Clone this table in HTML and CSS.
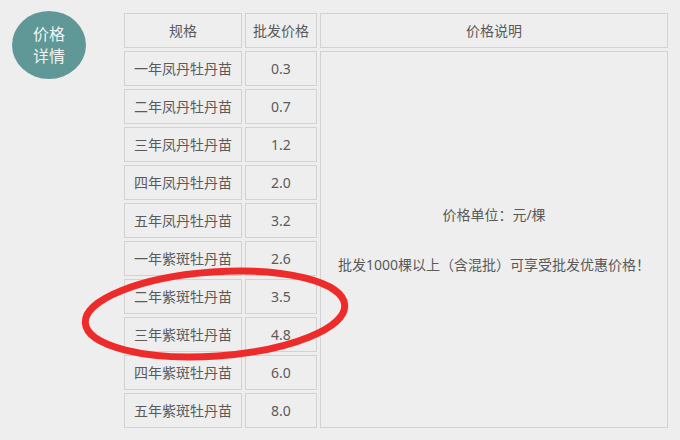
FILE: index.html
```html
<!DOCTYPE html>
<html lang="zh-CN">
<head>
    <meta charset="UTF-8">
    <title>价格详情</title>
    <link rel="stylesheet" href="styles.css">
</head>
<body>
    <div class="price-box">
        <div class="badge">价格<br>详情</div>

        <table class="price-table">
            <thead>
                <tr>
                    <th class="col-name">规格</th>
                    <th class="col-price">批发价格</th>
                    <th class="col-note">价格说明</th>
                </tr>
            </thead>
            <tbody>
                <tr>
                    <td>一年凤丹牡丹苗</td>
                    <td>0.3</td>
                    <td class="note" rowspan="10">价格单位：元/棵<br><br>批发1000棵以上（含混批）可享受批发优惠价格！</td>
                </tr>
                <tr><td>二年凤丹牡丹苗</td><td>0.7</td></tr>
                <tr><td>三年凤丹牡丹苗</td><td>1.2</td></tr>
                <tr><td>四年凤丹牡丹苗</td><td>2.0</td></tr>
                <tr><td>五年凤丹牡丹苗</td><td>3.2</td></tr>
                <tr><td>一年紫斑牡丹苗</td><td>2.6</td></tr>
                <tr><td>二年紫斑牡丹苗</td><td>3.5</td></tr>
                <tr><td>三年紫斑牡丹苗</td><td>4.8</td></tr>
                <tr><td>四年紫斑牡丹苗</td><td>6.0</td></tr>
                <tr><td>五年紫斑牡丹苗</td><td>8.0</td></tr>
            </tbody>
        </table>
    </div>

    <!-- hand-drawn highlight around the two zibán rows -->
    <svg class="mark" width="680" height="440" viewBox="0 0 680 440">
        <ellipse cx="215" cy="314" rx="130" ry="42" transform="rotate(-4 215 314)"
                 fill="none" stroke="#ee2b2b" stroke-width="7"/>
    </svg>
</body>
</html>
```

FILE: styles.css
```css
body {
    margin: 0;
    background-color: #eeeeee;
    font-family: "Noto Sans", "Noto Sans CJK SC", sans-serif;
    color: #555;
    position: relative;
    height: 440px;
    overflow: hidden;
}
.price-box {
    display: flex;
    align-items: flex-start;
    padding: 10px 0 0 12px;
}
.badge {
    width: 74px;
    height: 68px;
    margin-top: 1px;
    border-radius: 50%;
    background-color: #5f9896;
    color: #eef5f4;
    font-size: 16px;
    line-height: 22px;
    display: flex;
    align-items: center;
    justify-content: center;
    text-align: center;
}
.price-table {
    margin-left: 35px;
    border-collapse: separate;
    border-spacing: 3px;
    table-layout: fixed;
    width: 550px;
    font-size: 14px;
}
.price-table th,
.price-table td {
    box-sizing: border-box;
    border: 1px solid #d2d2d2;
    padding: 0;
    line-height: 33px;
    text-align: center;
    font-weight: normal;
    color: #5a5a5a;
}
.col-name {
    width: 118px;
}
.col-price {
    width: 72px;
}
.col-note {
    width: 348px;
}
.price-table td.note {
    line-height: 25px;
    vertical-align: middle;
}
.mark {
    position: absolute;
    left: 0;
    top: 0;
    pointer-events: none;
}
```
